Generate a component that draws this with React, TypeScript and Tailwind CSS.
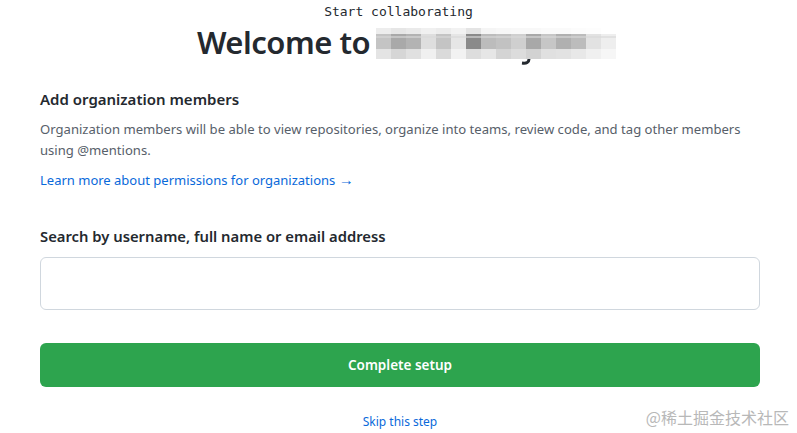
import React from "react";

const mosaic = [
  ["#ededed", "#e6e6e6", "#eaeaea", "#f0f0f0", "#ececec", "#f2f2f2", "#e4e4e4", "#f5f5f5", "#f7f7f7", "#f8f8f8", "#f8f8f8", "#fafafa", "#fafafa", "#fcfcfc", "#fdfdfd", "#fff"],
  ["#c4c4c4", "#a9a9a9", "#b3b3b3", "#dedede", "#c4c4c4", "#e6e6e6", "#8a8a8a", "#bcbcbc", "#c2c2c2", "#cfcfcf", "#a8a8a8", "#c6c6c6", "#b0b0b0", "#bcbcbc", "#e2e2e2", "#eeeeee"],
  ["#e4e4e4", "#d6d6d6", "#e0e0e0", "#f0f0f0", "#dadada", "#f2f2f2", "#dddddd", "#e6e6e6", "#d4d4d4", "#dcdcdc", "#d2d2d2", "#e0e0e0", "#e2e2e2", "#e8e8e8", "#f0f0f0", "#f6f6f6"],
];

function Mosaic() {
  return (
    <svg width="246" height="40" viewBox="0 0 246 40" className="block">
      {mosaic.map((row, r) =>
        row.map((c, i) => (
          <rect key={`${r}-${i}`} x={i * 15} y={[0, 6, 21][r]} width="15" height={[6, 15, 10][r]} fill={c} />
        ))
      )}
      <rect x="0" y="8" width="240" height="2" fill="#d8d8d8" opacity="0.6" />
      <path d="M153 31 q0 5 -7 4" stroke="#24292f" strokeWidth="3" fill="none" />
    </svg>
  );
}

export default function App() {
  return (
    <div className="w-[797px] h-[433px] bg-white relative overflow-hidden" style={{ fontFamily: "'Noto Sans', 'Open Sans', sans-serif" }}>
      <div className="text-center text-[13px] leading-none text-[#24292f] pt-[5px]" style={{ fontFamily: "'DejaVu Sans Mono', 'Liberation Mono', monospace" }}>
        Start collaborating
      </div>
      <div className="flex justify-center items-start pl-[22px] mt-[4px] h-[42px]">
        <h1 className="text-[31px] leading-[40px] font-semibold text-[#24292f] tracking-[-0.5px]">Welcome to</h1>
        <div className="ml-[6px] mt-[6px]">
          <Mosaic />
        </div>
      </div>

      <div className="pl-[40px] pr-[37px] mt-[25px]">
        <h2 className="text-[15px] leading-[20px] font-semibold text-[#24292f]">Add organization members</h2>
        <p className="mt-[10px] text-[13.1px] leading-[21px] text-[#57606a]">
          Organization members will be able to view repositories, organize into teams, review code, and tag other members using @mentions.
        </p>
        <a className="block mt-[9px] text-[13px] leading-[20px] text-[#0969da]">
          Learn more about permissions for organizations <span className="text-[15px] leading-none">→</span>
        </a>

        <label className="block mt-[36px] text-[14.8px] leading-[20px] font-semibold text-[#24292f]">
          Search by username, full name or email address
        </label>
        <input className="mt-[11px] w-full h-[53px] rounded-[6px] border border-[#d0d7de] outline-none px-3" />

        <button className="mt-[33px] w-full h-[44px] rounded-[6px] bg-[#2da44e] text-white text-[13.5px] font-semibold">
          Complete setup
        </button>
        <div className="text-center mt-[27px] text-[12px] leading-[16px] text-[#0969da]">Skip this step</div>
      </div>

      <div className="absolute right-[8px] bottom-[6px] text-[16px] leading-[20px] text-[#b8b8b8]" style={{ fontFamily: "'Noto Sans CJK SC', sans-serif" }}>
        @稀土掘金技术社区
      </div>
    </div>
  );
}
